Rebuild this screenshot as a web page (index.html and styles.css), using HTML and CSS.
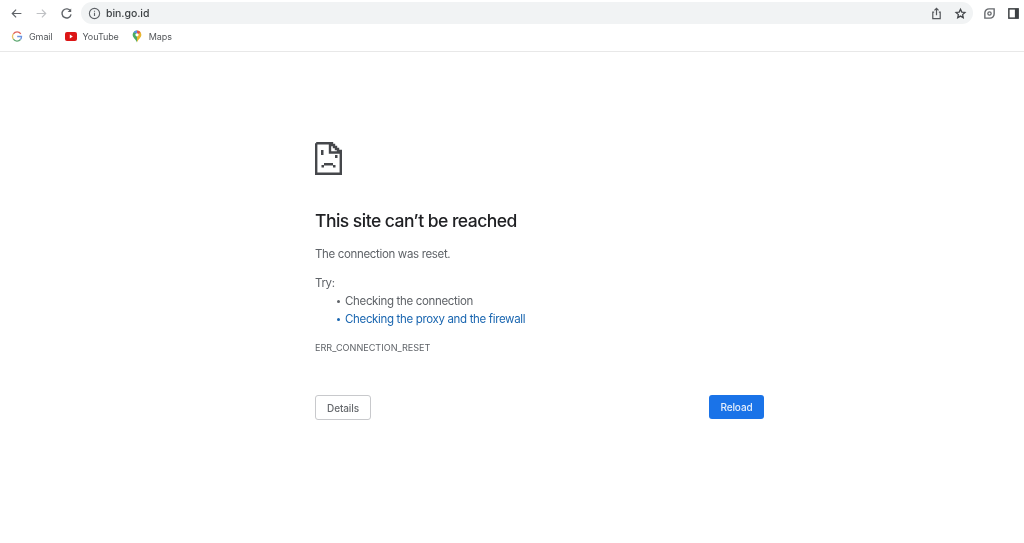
FILE: index.html
```html
<!DOCTYPE html>
<html lang="en">
<head>
<meta charset="utf-8">
<title>bin.go.id</title>
<link rel="stylesheet" href="styles.css">
</head>
<body>
<header class="chrome">
  <div class="toolbar">
    <svg class="nav" viewBox="0 0 16 16"><path d="M14 8H3M7.500 3.200 2.800 8l4.700 4.800" fill="none" stroke="#5f6368" stroke-width="1.500"/></svg>
    <svg class="nav" viewBox="0 0 16 16"><path d="M2 8h11M8.500 3.200 13.200 8l-4.700 4.800" fill="none" stroke="#bfc1c4" stroke-width="1.400"/></svg>
    <svg class="nav" viewBox="0 0 16 16"><path d="M13 5.200A5.600 5.600 0 1 0 13.600 9" fill="none" stroke="#5f6368" stroke-width="1.700"/><path d="M13.800 1.800v4.400H9.400z" fill="#5f6368"/></svg>
    <div class="omnibox">
      <svg class="info" viewBox="0 0 14 14"><circle cx="7" cy="7" r="5.500" fill="none" stroke="#5f6368" stroke-width="1.200"/><path d="M7 6.200v3.600M7 4v1.200" stroke="#5f6368" stroke-width="1.200"/></svg>
      <span class="url">bin.go.id</span>
      <span class="spring"></span>
      <svg class="tool" viewBox="0 0 14 14"><path d="M4.500 5.500H3v7h8v-7H9.500M7 9V1.500M4.800 3.600 7 1.400l2.200 2.200" fill="none" stroke="#55585c" stroke-width="1.300"/></svg>
      <svg class="tool star" viewBox="0 0 14 14"><path d="m7 2.400 1.400 3.100 3.400.4-2.500 2.300.7 3.300L7 9.800l-3 1.700.7-3.300-2.500-2.300 3.400-.4z" fill="none" stroke="#45484c" stroke-width="1.400"/></svg>
    </div>
    <svg class="tool ext" viewBox="0 0 14 14"><path d="M2 12V6.500A4.500 4.500 0 0 1 6.500 2H12v5.500A4.500 4.500 0 0 1 7.500 12z" fill="none" stroke="#66696d" stroke-width="1.500"/><circle cx="7" cy="7" r="1.800" fill="none" stroke="#66696d" stroke-width="1.400"/></svg>
    <svg class="tool panel" viewBox="0 0 14 14"><rect x="2" y="2" width="10" height="10" fill="none" stroke="#3c4043" stroke-width="1.600"/><rect x="8.500" y="2" width="3.500" height="10" fill="#3c4043"/></svg>
  </div>
  <nav class="bookmarks">
    <a class="bookmark gmail">
      <svg class="mark" viewBox="0 0 12 12"><path d="M9.800 3.400A4.500 4.500 0 0 0 2.400 3.400" fill="none" stroke="#e0645c" stroke-width="1.300"/><path d="M2.400 3.400a4.500 4.500 0 0 0 0 5.200" fill="none" stroke="#e8c468" stroke-width="1.300"/><path d="M2.400 8.600a4.500 4.500 0 0 0 7.100.4" fill="none" stroke="#62aa75" stroke-width="1.300"/><path d="M9.500 9c.7-.7 1-1.800 1-3H6.200" fill="none" stroke="#6b93e0" stroke-width="1.300"/></svg>
      <span>Gmail</span>
    </a>
    <a class="bookmark yt-link">
      <svg class="mark yt" viewBox="0 0 12 9"><rect width="12" height="9" rx="2" fill="#dc1616"/><path d="m4.800 2.500 3 2-3 2z" fill="#fff"/></svg>
      <span>YouTube</span>
    </a>
    <a class="bookmark">
      <svg class="mark" viewBox="0 0 12 14"><path d="M6 .5a4.700 4.700 0 0 1 4.700 4.700c0 3.200-3.400 4.600-4.700 8.300z" fill="#e8b62f"/><path d="M6 .5a4.700 4.700 0 0 0-4.700 4.700c0 3.200 3.400 4.600 4.700 8.300z" fill="#4bab62"/><path d="M2.200 2.600A4.700 4.700 0 0 1 6 .5v3z" fill="#5b8def"/><path d="M6 .5a4.700 4.700 0 0 1 3.900 2L6 5z" fill="#e0524a"/><circle cx="6" cy="5.200" r="1.700" fill="#fff"/></svg>
      <span>Maps</span>
    </a>
  </nav>
</header>
<main class="page">
  <div class="error">
    <svg class="sad" viewBox="0 0 27 33">
      <path d="M1.200 1.200H15V10.500H25.800M15 1.200H17V3H19V5H21V7H23V9H25.800V31.800H1.200V1.200" fill="none" stroke="#45474b" stroke-width="2.400"/>
      <path d="M6 8h2.500v5H6zM20 13h2.500v3H20zM9 21h9v2.400H9zM6.500 23h2.500v2.400H6.500zM18 23h2.500v2.400H18z" fill="#45474b"/>
    </svg>
    <h1 class="title">This site can’t be reached</h1>
    <p class="message">The connection was reset.</p>
    <p class="try">Try:</p>
    <ul class="suggestions">
      <li>Checking the connection</li>
      <li class="link">Checking the proxy and the firewall</li>
    </ul>
    <p class="code">ERR_CONNECTION_RESET</p>
    <div class="actions">
      <button class="btn details">Details</button>
      <button class="btn reload">Reload</button>
    </div>
  </div>
</main>
</body>
</html>
```
FILE: styles.css
```css
* { box-sizing: border-box; }
html, body { margin: 0; height: 100%; overflow: hidden; background: #fff; }
body { font-family: Inter, "Liberation Sans", sans-serif; color: #5f6368; filter: blur(0.5px); }

.chrome { height: 52px; border-bottom: 1px solid #e8e8e8; display: flex; flex-direction: column; }
.toolbar { height: 26px; display: flex; align-items: center; padding: 0 4px 0 10px; }
.nav { width: 13px; height: 13px; margin-right: 12px; flex: none; }
.omnibox { flex: 1; height: 22px; margin-left: -4px; margin-right: 10px; background: #f1f3f4; border-radius: 11px; display: flex; align-items: center; padding: 0 6px 0 7px; }
.info { width: 13px; height: 13px; }
.url { margin-left: 5px; font-size: 10.500px; letter-spacing: -0.05px; font-weight: 500; color: #3c4043; }
.spring { flex: 1; }
.tool { width: 13px; height: 13px; flex: none; }
.star { margin-left: 11px; }
.ext { margin-left: 0; }
.panel { margin-left: 11px; }

.bookmarks { height: 21px; display: flex; align-items: center; padding-left: 11px; }
.bookmark { display: flex; align-items: center; font-size: 9px; letter-spacing: -0.1px; color: #54575b; margin-right: 13px; }
.gmail { margin-right: 12px; }
.yt-link { margin-right: 12px; }
.mark { width: 12px; height: 13px; margin-right: 6px; }
.yt { height: 9px; }

.page { padding: 90px 0 0 315px; }
.error { width: 449px; }
.sad { display: block; width: 27px; height: 33px; }
.title { margin: 34px 0 0; font-size: 17.500px; letter-spacing: -0.52px; line-height: 24px; font-weight: 550; color: #202124; }
.message { margin: 13px 0 0; font-size: 11.500px; letter-spacing: -0.34px; line-height: 16px; }
.try { margin: 13px 0 0; font-size: 11.500px; letter-spacing: -0.34px; line-height: 16px; }
.suggestions { margin: 1px 0 0; padding: 0 0 0 30px; font-size: 11.500px; letter-spacing: -0.34px; line-height: 18px; list-style: none; }
.suggestions li::before { content: ""; display: inline-block; width: 3px; height: 3px; margin: 0 5px 2px -8px; border-radius: 50%; background: currentColor; }
.link { color: #1a66b0; }
.code { margin: 14px 0 0; font-size: 9.100px; line-height: 12px; }
.actions { margin-top: 41px; display: flex; justify-content: space-between; align-items: flex-start; }
.btn { font: 500 10px Inter, "Liberation Sans", sans-serif; letter-spacing: -0.1px; border-radius: 3px; padding: 0; }
.details { width: 56px; height: 25px; background: #fff; border: 1.500px solid #c8c9cc; color: #66696d; }
.reload { width: 55px; height: 24px; background: #1a73e8; border: 0; color: #e4eefc; }
```
